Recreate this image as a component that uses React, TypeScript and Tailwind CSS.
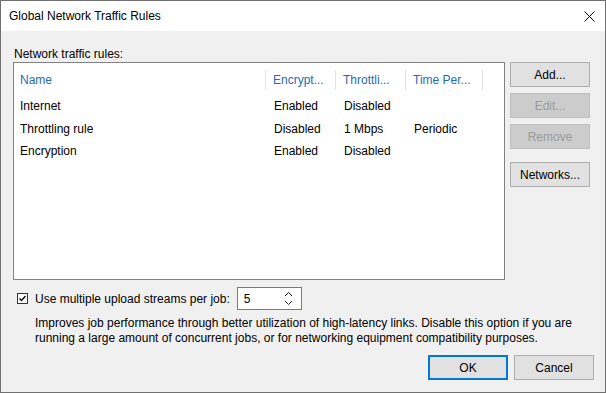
import React from 'react';

const font = { fontFamily: '"Liberation Sans", Arial, sans-serif' };

const rows = [
  { name: 'Internet', enc: 'Enabled', thr: 'Disabled', time: '' },
  { name: 'Throttling rule', enc: 'Disabled', thr: '1 Mbps', time: 'Periodic' },
  { name: 'Encryption', enc: 'Enabled', thr: 'Disabled', time: '' },
];

function Btn({ label, disabled, primary }: { label: string; disabled?: boolean; primary?: boolean }) {
  let cls = 'bg-[#e1e1e1] border border-[#adadad] text-black';
  if (disabled) cls = 'bg-[#cccccc] border border-[#bfbfbf] text-[#9a9a9a]';
  if (primary) cls = 'bg-[#e1e1e1] border-2 border-[#0078d7] text-black';
  return (
    <div className={`w-[80px] h-[25px] flex items-center justify-center text-[12px] ${cls}`}>{label}</div>
  );
}

export default function App() {
  return (
    <div style={font} className="w-[606px] h-[393px] border border-[#707070] flex flex-col text-[12px] text-black">
      <div className="h-[30px] bg-white flex items-center justify-between pl-[8px] pr-[10px]">
        <span>Global Network Traffic Rules</span>
        <svg width="11" height="11" viewBox="0 0 11 11" stroke="#000" strokeWidth="1">
          <path d="M0.5 0.5L10.5 10.5M10.5 0.5L0.5 10.5" />
        </svg>
      </div>
      <div className="flex-1 bg-[#f0f0f0] pl-[12px] pr-[11px] pt-[13px] flex flex-col">
        <div className="h-[18px] leading-[20px] pl-[1px]">Network traffic rules:</div>
        <div className="flex gap-[5px]">
          <div className="w-[492px] h-[218px] bg-white border border-[#828282] pt-[6px]">
            <div className="flex h-[22px] items-center text-[#1e6cb5]">
              <div className="w-[252px] pl-[6px] h-[20px] leading-[21px] border-r border-[#e3e3e3]">Name</div>
              <div className="w-[70px] pl-[7px] h-[20px] leading-[21px] border-r border-[#e3e3e3]">Encrypt...</div>
              <div className="w-[70px] pl-[7px] h-[20px] leading-[21px] border-r border-[#e3e3e3]">Throttli...</div>
              <div className="w-[77px] pl-[7px] h-[20px] leading-[21px] border-r border-[#e3e3e3]">Time Per...</div>
            </div>
            <div className="mt-[4px]">
              {rows.map((r) => (
                <div key={r.name} className="flex h-[22.5px] items-center">
                  <div className="w-[253px] pl-[6px]">{r.name}</div>
                  <div className="w-[70px] pl-[7px]">{r.enc}</div>
                  <div className="w-[70px] pl-[7px]">{r.thr}</div>
                  <div className="w-[77px] pl-[7px]">{r.time}</div>
                </div>
              ))}
            </div>
          </div>
          <div className="flex flex-col">
            <Btn label="Add..." />
            <div className="mt-[6px]"><Btn label="Edit..." disabled /></div>
            <div className="mt-[6px]"><Btn label="Remove" disabled /></div>
            <div className="mt-[13px]"><Btn label="Networks..." /></div>
          </div>
        </div>
        <div className="flex items-center mt-[7px] h-[23px]">
          <div className="ml-[4px] w-[11px] h-[11px] border border-[#333] bg-white flex items-center justify-center">
            <svg width="9" height="9" viewBox="0 0 9 9" fill="none" stroke="#000" strokeWidth="1.3">
              <path d="M1.5 4.5L3.5 6.5L7.5 2" />
            </svg>
          </div>
          <span className="ml-[7px]">Use multiple upload streams per job:</span>
          <div className="ml-[7px] w-[65px] h-[23px] border border-[#7a7a7a] bg-white flex items-center justify-between pl-[6px] pr-[8px]">
            <span>5</span>
            <svg width="9" height="15" viewBox="0 0 9 15" fill="none" stroke="#222" strokeWidth="1">
              <path d="M1 5L4.5 1.5L8 5M1 10L4.5 13.5L8 10" />
            </svg>
          </div>
        </div>
        <div className="pl-[22px] mt-[6px] leading-[15px]">
          <div>Improves job performance through better utilization of high-latency links. Disable this option if you are</div>
          <div>running a large amount of concurrent jobs, or for networking equipment compatibility purposes.</div>
        </div>
        <div className="flex justify-end gap-[6px] mt-[9px]">
          <Btn label="OK" primary />
          <Btn label="Cancel" />
        </div>
      </div>
    </div>
  );
}
